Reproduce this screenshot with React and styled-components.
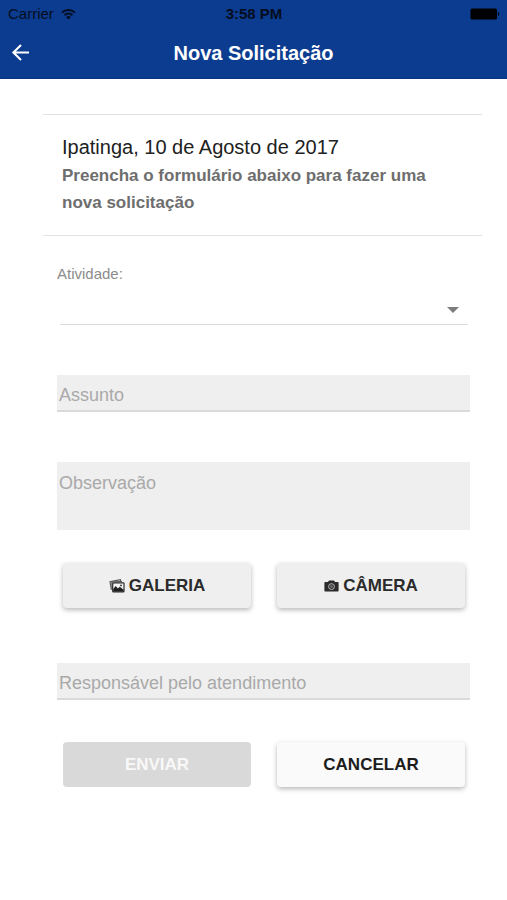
import React from 'react';
import styled, { createGlobalStyle, css } from 'styled-components';

const GlobalStyle = createGlobalStyle`
  *, *::before, *::after { box-sizing: border-box; }
  body {
    margin: 0;
    background: #fff;
    color: #212121;
    font-family: "Liberation Sans", Arial, Helvetica, sans-serif;
  }
`;

const Header = styled.header`
  background: #0c3c8f;
  border-bottom: 1px solid #093480;
`;

const StatusBar = styled.div`
  display: grid;
  grid-template-columns: 1fr auto 1fr;
  align-items: center;
  height: 27px;
  padding: 0 7px 0 8px;
  color: #040d20;
  font-size: 15px;
`;

const Carrier = styled.span`
  display: flex;
  align-items: center;
  gap: 7px;
`;

const Clock = styled.span`
  font-weight: 700;
`;

const BatteryIcon = styled.svg`
  justify-self: end;
`;

const Toolbar = styled.div`
  display: grid;
  grid-template-columns: 40px 1fr 40px;
  align-items: center;
  height: 51px;
`;

const BackButton = styled.button`
  display: flex;
  align-items: center;
  justify-content: center;
  height: 40px;
  padding: 0;
  border: 0;
  background: none;
  color: #fff;
`;

const Title = styled.h1`
  margin: 0;
  color: #fff;
  font-size: 20px;
  font-weight: 700;
  line-height: 24px;
  text-align: center;
`;

const Content = styled.main`
  padding: 35px 25px 32px 43px;
`;

const Intro = styled.section`
  padding: 18px 19px 19px;
  border: solid #e2e2e2;
  border-width: 1px 0;
`;

const DateLine = styled.h2`
  margin: 0 0 1px;
  font-size: 20px;
  font-weight: 400;
  line-height: 28px;
`;

const Lead = styled.p`
  margin: 0;
  color: #6e6e6e;
  font-size: 17px;
  font-weight: 700;
  line-height: 27px;
`;

const Form = styled.form`
  display: flex;
  flex-direction: column;
  padding: 27px 12px 0 14px;
`;

const SelectField = styled.div`
  display: flex;
  flex-direction: column;
  margin-bottom: 50px;
`;

const SelectLabel = styled.label`
  color: #8c8c8c;
  font-size: 15px;
  line-height: 22px;
`;

const SelectBox = styled.div`
  display: grid;
  align-items: center;
  margin: 3px 2px 0 3px;
  border-bottom: 1px solid #dcdcdc;

  & > * { grid-area: 1 / 1; }
`;

const Select = styled.select`
  appearance: none;
  width: 100%;
  height: 36px;
  padding: 0 32px 0 2px;
  border: 0;
  background: transparent;
  color: inherit;
  font: inherit;
  font-size: 18px;
`;

const Caret = styled.svg`
  justify-self: end;
  margin: 8px 9px 0 0;
  pointer-events: none;
`;

const fieldStyle = css`
  display: block;
  width: 100%;
  padding: 6px 2px 0;
  border: 0;
  border-radius: 0;
  background: #efefef;
  color: #212121;
  font: inherit;
  font-size: 18px;
  line-height: 24px;

  &::placeholder {
    color: #a9a9a9;
    opacity: 1;
  }
`;

const TextField = styled.input`
  ${fieldStyle}
  height: 37px;
  border-bottom: 2px solid #dadada;
`;

const TextArea = styled.textarea`
  ${fieldStyle}
  height: 68px;
  margin: 50px 0 33px;
  padding-top: 9px;
  resize: none;
`;

const ButtonRow = styled.div`
  display: grid;
  grid-template-columns: 1fr 1fr;
  gap: 26px;
  margin: 0 5px 0 6px;
`;

const tones = {
  grey: css`
    background: #efefef;
    color: #2b2b2b;
  `,
  light: css`
    background: #fafafa;
    color: #1c1c1c;
  `,
};

const Button = styled.button`
  display: flex;
  align-items: center;
  justify-content: center;
  gap: 4px;
  height: 45px;
  padding: 0 8px;
  border: 0;
  border-radius: 4px;
  font: inherit;
  font-size: 17px;
  font-weight: 700;
  text-transform: uppercase;
  box-shadow: 0 2px 5px rgba(0, 0, 0, 0.28);
  ${({ $tone }) => tones[$tone]}

  &:disabled {
    background: #d9d9d9;
    color: #f8f8f8;
    box-shadow: none;
  }
`;

const Responsible = styled.div`
  margin: 55px 0 42px;
`;

function WifiIcon() {
  return (
    <svg width="15" height="12" viewBox="0 0 15 12" aria-hidden="true">
      <g fill="none" stroke="#040d20" strokeWidth="2">
        <path d="M1 4.6a9.2 9.2 0 0 1 13 0" />
        <path d="M3.6 7.2a5.5 5.5 0 0 1 7.8 0" />
      </g>
      <path d="M7.5 11.6 5.2 9.2a3.3 3.3 0 0 1 4.6 0z" fill="#040d20" />
    </svg>
  );
}

function ArrowIcon() {
  return (
    <svg width="18" height="18" viewBox="0 0 18 18" aria-hidden="true">
      <path d="M10 1 2.400 8.500l7.600 7.500M2.600 8.500H18" fill="none" stroke="currentColor" strokeWidth="2.1" />
    </svg>
  );
}

function GalleryIcon() {
  return (
    <svg width="16" height="14" viewBox="0 0 16 14" aria-hidden="true">
      <path d="M2.4 10.8 1 2.6 11.4.7l.4 1.6" fill="none" stroke="#555" strokeWidth="1.1" />
      <path d="M3 9.6 2.8 2.9 13 2.4" fill="none" stroke="#555" strokeWidth="1" />
      <rect x="3.7" y="3.9" width="11.3" height="9" rx="0.6" fill="#f4f4f4" stroke="#2b2b2b" strokeWidth="1.2" />
      <path d="M4.2 12.6V10l2.5-3 2.2 2.4 1.9-1.6 3.8 3v1.8z" fill="#1f1f1f" />
      <circle cx="12" cy="6.4" r="0.9" fill="#2b2b2b" />
    </svg>
  );
}

function CameraIcon() {
  return (
    <svg width="15" height="12" viewBox="0 0 15 12" aria-hidden="true">
      <path d="M1.4 2h2.5L5.1.4h4.8L11.1 2h2.5c.6 0 1 .4 1 1v7.4c0 .6-.4 1-1 1H1.4c-.6 0-1-.4-1-1V3c0-.6.4-1 1-1z" fill="#2b2b2b" />
      <circle cx="7.5" cy="6.6" r="2.9" fill="none" stroke="#bdbdbd" strokeWidth="1" />
      <circle cx="7.5" cy="6.6" r="1.3" fill="#777" />
    </svg>
  );
}

export default function App() {
  return (
    <>
      <GlobalStyle />
      <Header>
        <StatusBar>
          <Carrier>Carrier <WifiIcon /></Carrier>
          <Clock>3:58 PM</Clock>
          <BatteryIcon width="30" height="12" viewBox="0 0 30 12" aria-hidden="true">
            <rect x="0.5" y="0.5" width="26.5" height="11" rx="1.5" />
            <path d="M28 4c1.6.3 1.6 3.7 0 4z" />
          </BatteryIcon>
        </StatusBar>
        <Toolbar>
          <BackButton type="button" aria-label="Voltar"><ArrowIcon /></BackButton>
          <Title>Nova Solicitação</Title>
        </Toolbar>
      </Header>
      <Content>
        <Intro>
          <DateLine>Ipatinga, 10 de Agosto de 2017</DateLine>
          <Lead>Preencha o formulário abaixo para fazer uma nova solicitação</Lead>
        </Intro>
        <Form onSubmit={(event) => event.preventDefault()}>
          <SelectField>
            <SelectLabel htmlFor="atividade">Atividade:</SelectLabel>
            <SelectBox>
              <Select id="atividade" defaultValue="">
                <option value="" />
              </Select>
              <Caret width="12" height="6" viewBox="0 0 12 6" aria-hidden="true">
                <path d="M0 0h12L6 6z" fill="#7d7d7d" />
              </Caret>
            </SelectBox>
          </SelectField>
          <TextField type="text" placeholder="Assunto" aria-label="Assunto" />
          <TextArea placeholder="Observação" aria-label="Observação" />
          <ButtonRow>
            <Button type="button" $tone="grey"><GalleryIcon />Galeria</Button>
            <Button type="button" $tone="grey"><CameraIcon />Câmera</Button>
          </ButtonRow>
          <Responsible>
            <TextField type="text" placeholder="Responsável pelo atendimento" aria-label="Responsável pelo atendimento" />
          </Responsible>
          <ButtonRow>
            <Button type="submit" $tone="grey" disabled>Enviar</Button>
            <Button type="button" $tone="light">Cancelar</Button>
          </ButtonRow>
        </Form>
      </Content>
    </>
  );
}
